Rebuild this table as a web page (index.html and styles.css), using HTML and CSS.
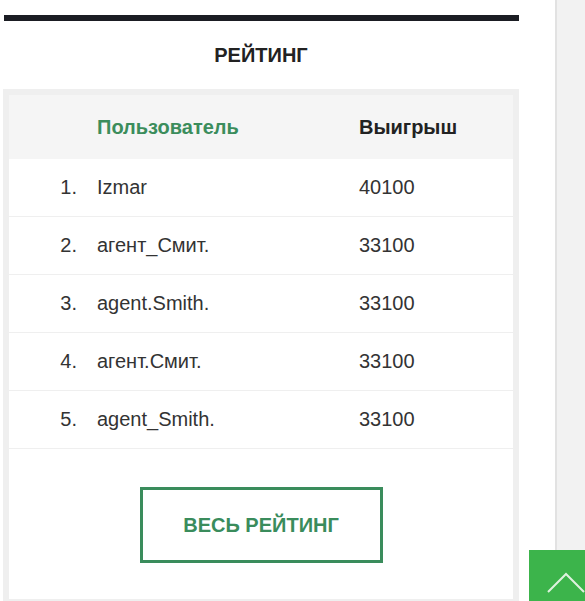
FILE: index.html
```html
<!DOCTYPE html>
<html lang="ru">
<head>
<meta charset="utf-8">
<title>Рейтинг</title>
<link rel="stylesheet" href="styles.css">
</head>
<body>
<div class="page">
  <main class="main">
    <div class="bar"></div>
    <h2 class="title">РЕЙТИНГ</h2>
    <section class="rating">
      <div class="row head">
        <div class="num"></div>
        <div class="user">Пользователь</div>
        <div class="win">Выигрыш</div>
      </div>
      <div class="row"><div class="num">1.</div><div class="name">Izmar</div><div class="val">40100</div></div>
      <div class="row"><div class="num">2.</div><div class="name">агент_Смит.</div><div class="val">33100</div></div>
      <div class="row"><div class="num">3.</div><div class="name">agent.Smith.</div><div class="val">33100</div></div>
      <div class="row"><div class="num">4.</div><div class="name">агент.Смит.</div><div class="val">33100</div></div>
      <div class="row"><div class="num">5.</div><div class="name">agent_Smith.</div><div class="val">33100</div></div>
      <div class="actions">
        <a class="all-btn" href="#">ВЕСЬ РЕЙТИНГ</a>
      </div>
    </section>
  </main>
  <aside class="side"></aside>
</div>
<a class="to-top" href="#" aria-label="Наверх">
  <svg width="56" height="56" viewBox="0 0 56 56"><polyline points="19,42 37,24 55,42" fill="none" stroke="#dff2df" stroke-width="2"/></svg>
</a>
</body>
</html>
```
FILE: styles.css
```css
* { box-sizing: border-box; }
html, body { margin: 0; padding: 0; height: 100%; }
body {
  font-family: "Liberation Sans", Arial, sans-serif;
  color: #333;
  background: #fff;
  overflow: hidden;
}
.page {
  display: flex;
  min-height: 100%;
}
.main {
  width: 555px;
  flex: none;
  padding: 15px 36px 0 3px;
  background: #fff;
}
.side {
  flex: 1;
  background: #f2f2f2;
  border-left: 2px solid #e2e2e2;
}
.bar {
  height: 6px;
  background: #1b1d23;
  margin-left: 1px;
}
.title {
  margin: 0;
  height: 68px;
  display: flex;
  align-items: center;
  justify-content: center;
  font-size: 20px;
  font-weight: bold;
  color: #222;
}
.rating {
  border: 6px solid #efefef;
  border-bottom-width: 4px;
  background: #fff;
}
.row {
  display: grid;
  grid-template-columns: 88px 262px 1fr;
  align-items: center;
  height: 58px;
  border-bottom: 1px solid #efefef;
  font-size: 20px;
  color: #333;
}
.row.head {
  height: 64px;
  background: #f5f5f5;
  border-bottom: none;
  font-weight: bold;
}
.num {
  text-align: right;
  padding-right: 20px;
}
.user { color: #3b8d5c; }
.win { color: #222; }
.actions {
  display: flex;
  justify-content: center;
  padding: 38px 0 36px;
}
.all-btn {
  width: 243px;
  height: 76px;
  border: 3px solid #3a8c5c;
  display: flex;
  align-items: center;
  justify-content: center;
  color: #3a8c5c;
  font-weight: bold;
  font-size: 20px;
  text-decoration: none;
}
.to-top {
  position: fixed;
  left: 529px;
  top: 550px;
  width: 60px;
  height: 60px;
  background: #3cb44b;
  display: block;
}
.to-top svg { display: block; }
```
